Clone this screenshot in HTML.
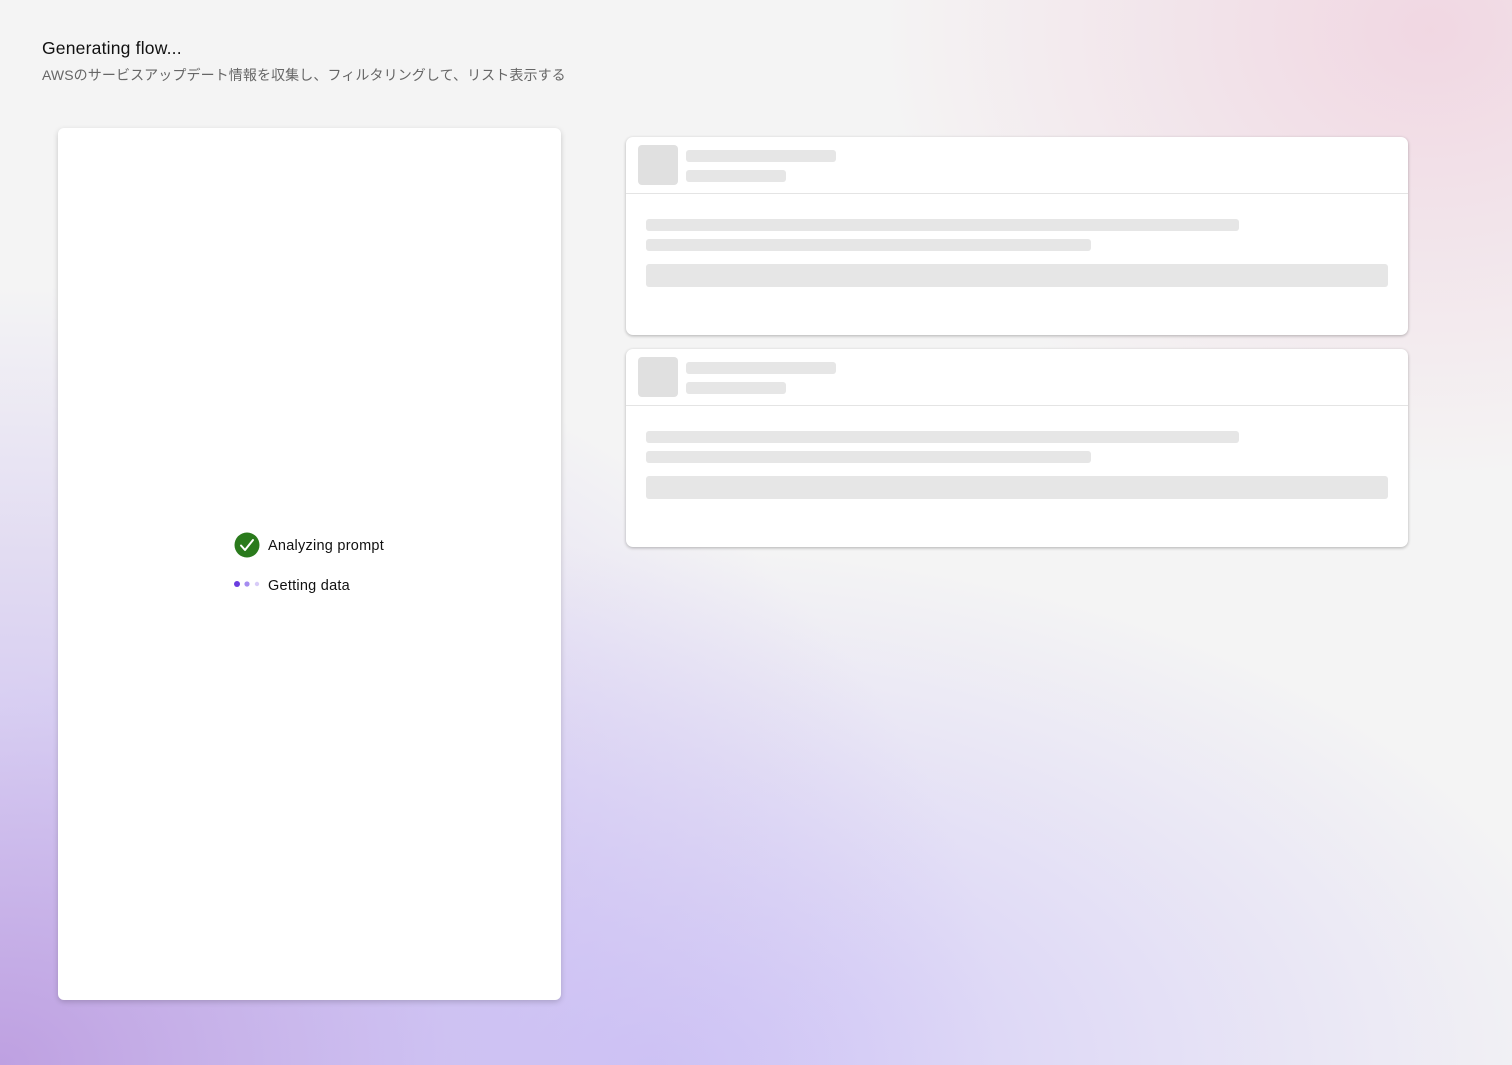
<!DOCTYPE html>
<html><head><meta charset="utf-8"><style>
*{margin:0;padding:0;box-sizing:border-box}
body{width:1512px;height:1065px;overflow:hidden;position:relative;font-family:"Liberation Sans","Noto Sans CJK JP",sans-serif;
background:
radial-gradient(ellipse 550px 450px at 1430px 30px, rgba(240,208,222,0.8), rgba(240,208,222,0) 100%),
radial-gradient(ellipse 1000px 780px at 0px 1065px, rgba(190,160,225,1), rgba(200,185,240,0.65) 45%, rgba(220,210,245,0) 100%),
radial-gradient(ellipse 950px 520px at 650px 1065px, rgba(205,195,248,0.9), rgba(210,200,245,0) 100%),
#f4f4f4;}
.t{position:absolute;left:42px;top:38px;font-size:17.5px;letter-spacing:0.2px;color:#111}
.s{position:absolute;left:42px;top:65px;font-size:14px;letter-spacing:0.1px;color:#666}
.panel{position:absolute;left:58px;top:128px;width:503px;height:872px;background:#fff;border-radius:6px;box-shadow:0 2px 6px rgba(0,0,0,.18)}
.step{position:absolute;font-size:14.5px;letter-spacing:0.25px;color:#111}
.card{position:absolute;left:626px;width:782px;height:198px;background:#fff;border-radius:7px;box-shadow:0 1px 3px rgba(0,0,0,.28)}
.card div{position:absolute;background:#e6e6e6;border-radius:3px}
.card .sq{left:12px;top:8px;width:40px;height:40px;background:#e0e0e0;border-radius:4px}
.card .hr{left:0;top:56px;width:782px;height:1px;background:#e4e4e4;border-radius:0}
</style></head><body>
<div class="t">Generating flow...</div>
<div class="s">AWSのサービスアップデート情報を収集し、フィルタリングして、リスト表示する</div>
<div class="panel"></div>
<svg style="position:absolute;left:234px;top:532px" width="26" height="26" viewBox="0 0 26 26"><circle cx="13" cy="13" r="12.5" fill="#2a7a1c"/><path d="M7 13.5l4 4.5 8-10" stroke="#fff" stroke-width="2" fill="none" stroke-linecap="round" stroke-linejoin="round"/></svg>
<div class="step" style="left:268px;top:538px">Analyzing prompt</div>
<svg style="position:absolute;left:232px;top:579px" width="30" height="10"><circle cx="5" cy="5" r="3" fill="#6a3de0"/><circle cx="15" cy="5" r="2.6" fill="#a58cf0"/><circle cx="25" cy="5" r="2.2" fill="#d8ccf8"/></svg>
<div class="step" style="left:268px;top:578px">Getting data</div>
<div class="card" style="top:137px"><div class="sq"></div><div style="left:60px;top:13px;width:150px;height:12px"></div><div style="left:60px;top:33px;width:100px;height:12px"></div><div class="hr"></div><div style="left:20px;top:82px;width:593px;height:12px"></div><div style="left:20px;top:102px;width:445px;height:12px"></div><div style="left:20px;top:127px;width:742px;height:23px"></div></div>
<div class="card" style="top:349px"><div class="sq"></div><div style="left:60px;top:13px;width:150px;height:12px"></div><div style="left:60px;top:33px;width:100px;height:12px"></div><div class="hr"></div><div style="left:20px;top:82px;width:593px;height:12px"></div><div style="left:20px;top:102px;width:445px;height:12px"></div><div style="left:20px;top:127px;width:742px;height:23px"></div></div>
</body></html>
